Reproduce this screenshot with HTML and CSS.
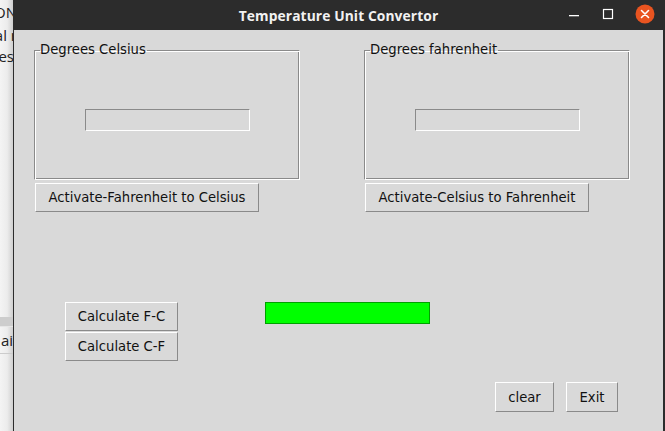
FILE: index.html
```html
<!DOCTYPE html>
<html>
<head>
<meta charset="utf-8">
<link rel="stylesheet" href="styles.css">
</head>
<body>
<div class="desk">
  <div class="behind">
    <div class="bline l1">JSON</div>
    <div class="bline l2">al r</div>
    <div class="bline l3">es</div>
    <div class="bband"></div>
    <div class="bline l4">ai</div>
  </div>
  <div class="window">
    <div class="titlebar">
      <div class="title">Temperature Unit Convertor</div>
      <div class="controls">
        <svg class="ctl" width="12" height="12" viewBox="0 0 12 12"><rect x="1" y="7" width="10" height="1.3" fill="#fff"/></svg>
        <svg class="ctl" width="12" height="12" viewBox="0 0 12 12"><rect x="1.5" y="1.5" width="9" height="9" fill="none" stroke="#fff" stroke-width="1.2"/></svg>
        <svg class="close" width="20" height="20" viewBox="0 0 20 20"><circle cx="10" cy="10" r="9.5" fill="#e95420"/><path d="M6.5 6.5 L13.5 13.5 M13.5 6.5 L6.5 13.5" stroke="#fff" stroke-width="1.6" stroke-linecap="round"/></svg>
      </div>
    </div>
    <div class="content">
      <div class="frames">
        <div class="col">
          <fieldset class="frame">
            <legend>Degrees Celsius</legend>
            <div class="fbody"><div class="entry"></div></div>
          </fieldset>
          <div class="btn wide">Activate-Fahrenheit to Celsius</div>
        </div>
        <div class="col">
          <fieldset class="frame">
            <legend>Degrees fahrenheit</legend>
            <div class="fbody"><div class="entry"></div></div>
          </fieldset>
          <div class="btn wide">Activate-Celsius to Fahrenheit</div>
        </div>
      </div>
      <div class="calc">
        <div class="calcbtns">
          <div class="btn calcbtn">Calculate F-C</div>
          <div class="btn calcbtn">Calculate C-F</div>
        </div>
        <div class="greenbar"></div>
      </div>
      <div class="bottom">
        <div class="btn clear">clear</div>
        <div class="btn exit">Exit</div>
      </div>
    </div>
  </div>
</div>
</body>
</html>
```

FILE: styles.css
```css
* { box-sizing: border-box; }
html, body { margin: 0; padding: 0; }
body {
  width: 665px;
  height: 431px;
  overflow: hidden;
  font-family: "DejaVu Sans", sans-serif;
  font-size: 13.2px;
  color: #111;
}
.desk {
  display: flex;
  width: 665px;
  height: 431px;
}
.behind {
  width: 13px;
  flex: none;
  overflow: hidden;
  background: linear-gradient(to right, #f4f4f4 0%, #ececec 55%, #cfcfcf 100%);
  display: flex;
  flex-direction: column;
  align-items: flex-end;
  font-family: "Open Sans", sans-serif;
  font-size: 15px;
  color: #222;
}
.bline {
  white-space: nowrap;
  line-height: 20px;
  height: 20px;
  margin-right: -3px;
}
.l1 { margin-top: 2px; margin-right: -4px; }
.l2 { margin-top: 3px; margin-right: -4px; }
.l3 { margin-top: 1px; margin-right: -1px; }
.bband {
  align-self: stretch;
  height: 10px;
  margin-top: 251px;
  background: #cdcdcd;
  border-bottom: 1px solid #e6e6e6;
}
.l4 {
  margin-top: 3px;
  margin-right: 0;
  border-bottom: 1px solid #cccccc;
  align-self: stretch;
  text-align: right;
  height: 24px;
}
.window {
  flex: 1;
  display: flex;
  flex-direction: column;
  background: #d9d9d9;
  border-left: 1px solid #2c2c2c;
  border-right: 2px solid #2c2c2c;
}
.titlebar {
  height: 30px;
  flex: none;
  background: #2c2c2c;
  display: flex;
  align-items: center;
  justify-content: center;
  position: relative;
}
.title {
  font-family: "Open Sans", sans-serif;
  font-weight: 700;
  font-size: 13.8px;
  color: #f2f2f2;
  letter-spacing: 0.1px;
}
.controls {
  position: absolute;
  right: 8px;
  top: 3px;
  display: flex;
  align-items: center;
  gap: 22px;
  height: 22px;
}
.ctl { display: block; }
.close { display: block; margin-left: -1px; }
.content {
  flex: 1;
  display: flex;
  flex-direction: column;
  padding: 12px 0 0 20px;
}
.frames {
  display: flex;
  gap: 64px;
}
.col {
  display: flex;
  flex-direction: column;
  align-items: flex-start;
}
.frame {
  margin: 0;
  padding: 0;
  width: 266px;
  height: 138px;
  border: 1px solid;
  border-color: #8a8a8a #ffffff #ffffff #8a8a8a;
  box-shadow: inset 1px 1px 0 #ffffff, inset -1px -1px 0 #8a8a8a;
}
.frame legend {
  padding: 0 1px 0 0;
  margin-left: 5px;
  line-height: 16px;
}
.fbody {
  height: 120px;
  display: flex;
  align-items: center;
  justify-content: center;
}
.entry {
  width: 165px;
  height: 22px;
  margin-top: 3px;
  border: 1px solid;
  border-color: #8a8a8a #ffffff #ffffff #8a8a8a;
  background: #d9d9d9;
}
.btn {
  display: flex;
  align-items: center;
  justify-content: center;
  background: #d9d9d9;
  border: 1px solid;
  border-color: #ffffff #8a8a8a #8a8a8a #ffffff;
  white-space: nowrap;
}
.wide {
  width: 224px;
  height: 29px;
  margin: 3px 0 0 1px;
}
.calc {
  display: flex;
  align-items: flex-start;
  margin-top: 90px;
  padding-left: 31px;
}
.calcbtns {
  display: flex;
  flex-direction: column;
  gap: 1px;
}
.calcbtn {
  width: 113px;
  height: 29px;
}
.greenbar {
  width: 165px;
  height: 22px;
  margin-left: 87px;
  background: #00ff00;
  border: 1px solid #00a000;
}
.bottom {
  display: flex;
  justify-content: flex-end;
  gap: 12px;
  margin-top: 21px;
  padding-right: 45px;
}
.clear { width: 59px; height: 30px; }
.exit { width: 52px; height: 30px; }
```
